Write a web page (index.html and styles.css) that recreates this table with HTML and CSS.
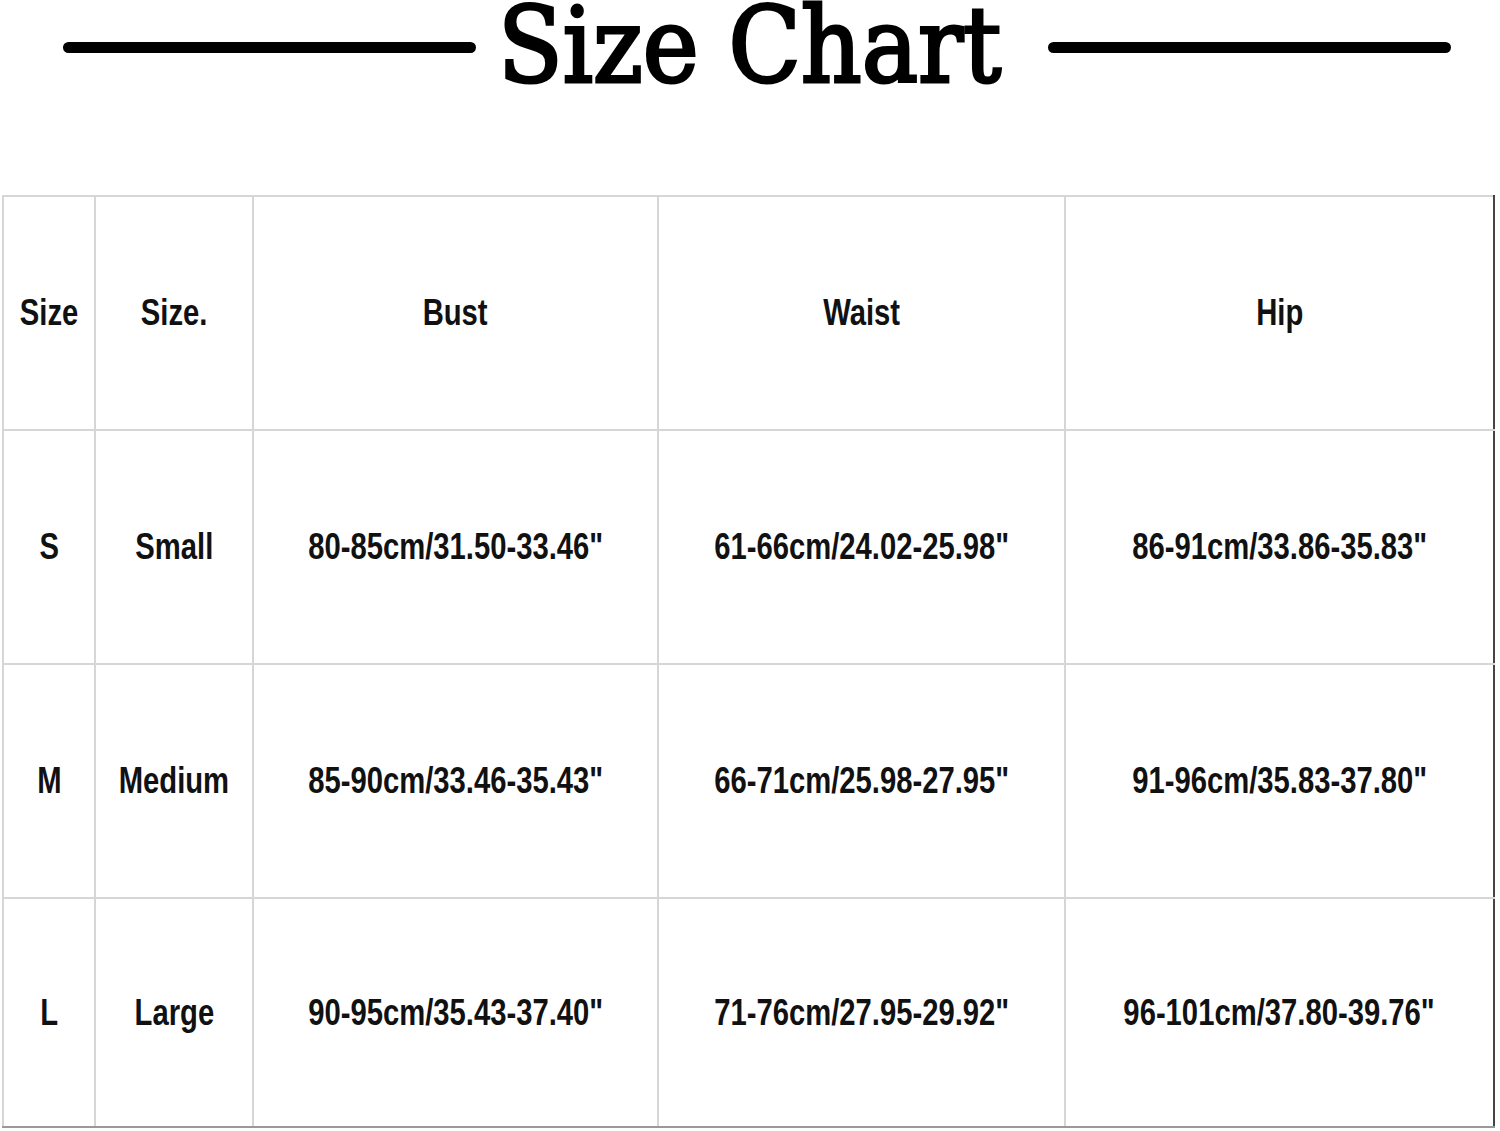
FILE: index.html
```html
<!DOCTYPE html>
<html lang="en">
<head>
<meta charset="utf-8">
<title>Size Chart</title>
<link rel="stylesheet" href="styles.css">
</head>
<body>
<div class="page">
  <header class="heading">
    <span class="rule rule-left"></span>
    <h1 class="title">Size Chart</h1>
    <span class="rule rule-right"></span>
  </header>
  <table class="chart">
    <colgroup>
      <col class="c1"><col class="c2"><col class="c3"><col class="c4"><col class="c5">
    </colgroup>
    <tr><td><span class="t">Size</span></td><td><span class="t">Size.</span></td><td><span class="t">Bust</span></td><td><span class="t">Waist</span></td><td><span class="t">Hip</span></td></tr>
    <tr><td><span class="t">S</span></td><td><span class="t">Small</span></td><td><span class="t">80-85cm/31.50-33.46"</span></td><td><span class="t">61-66cm/24.02-25.98"</span></td><td><span class="t">86-91cm/33.86-35.83"</span></td></tr>
    <tr><td><span class="t">M</span></td><td><span class="t">Medium</span></td><td><span class="t">85-90cm/33.46-35.43"</span></td><td><span class="t">66-71cm/25.98-27.95"</span></td><td><span class="t">91-96cm/35.83-37.80"</span></td></tr>
    <tr class="last"><td><span class="t">L</span></td><td><span class="t">Large</span></td><td><span class="t">90-95cm/35.43-37.40"</span></td><td><span class="t">71-76cm/27.95-29.92"</span></td><td><span class="t">96-101cm/37.80-39.76"</span></td></tr>
  </table>
</div>
</body>
</html>
```
FILE: styles.css
```css
html, body {
  margin: 0;
  padding: 0;
  background: #fff;
}
.page {
  width: 1500px;
  height: 1131px;
  overflow: hidden;
  padding-left: 2px;
  box-sizing: border-box;
}
.heading {
  height: 195px;
  display: flex;
  align-items: flex-start;
  box-sizing: border-box;
}
.rule {
  display: block;
  height: 11px;
  background: #000;
  border-radius: 6px;
  margin-top: 42px;
}
.rule-left {
  width: 413px;
  margin-left: 61px;
}
.rule-right {
  width: 403px;
}
.title {
  margin: 0 47px 0 22px;
  font-family: "DejaVu Serif Condensed", "DejaVu Serif", serif;
  font-weight: normal;
  font-size: 105px;
  line-height: 92px;
  color: #000;
  white-space: nowrap;
  -webkit-text-stroke: 3px #000;
}
.chart {
  border-collapse: collapse;
  table-layout: fixed;
  width: 1491px;
  font-family: "Liberation Sans", Arial, sans-serif;
  font-weight: bold;
  font-size: 37px;
  color: #111;
}
.c1 { width: 92px; }
.c2 { width: 158px; }
.c3 { width: 405px; }
.c4 { width: 407px; }
.c5 { width: 429px; }
.chart td {
  height: 232px;
  padding: 0;
  text-align: center;
  vertical-align: middle;
  border: 2px solid #d6d6d6;
  white-space: nowrap;
}
.chart .last td {
  height: 227px;
  border-bottom: 2px solid #999;
}
.chart tr td:last-child {
  border-right: 2px solid #444;
}
.t {
  display: inline-block;
  transform: scaleX(0.79);
  transform-origin: center;
}
```
